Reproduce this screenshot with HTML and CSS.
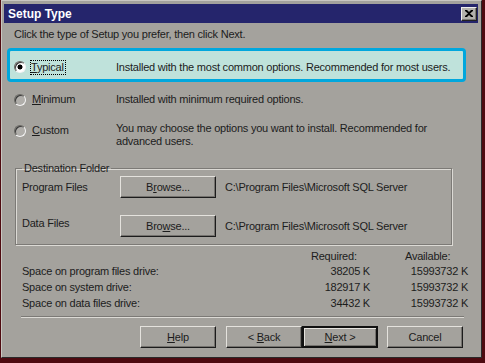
FILE: index.html
```html
<!DOCTYPE html>
<html lang="en">
<head>
    <meta charset="UTF-8">
    <title>Setup Type</title>
    <link rel="stylesheet" href="styles.css">
</head>
<body>
    <div class="window">
        <div class="title-bar">
            <span class="title">Setup Type</span>
            <span class="close-btn">
                <svg width="8" height="7" viewBox="0 0 8 7"><path d="M0 0h2l2 2 2-2h2v1L5 3.5 8 6v1H6L4 5 2 7H0V6l3-2.5L0 1z" fill="#000"/></svg>
            </span>
        </div>
        <div class="intro">Click the type of Setup you prefer, then click Next.</div>

        <div class="option selected">
            <span class="radio checked"></span>
            <span class="opt-label"><span class="focus"><u>T</u>ypical</span></span>
            <span class="opt-desc">Installed with the most common options. Recommended for most users.</span>
        </div>
        <div class="option minimum">
            <span class="radio"></span>
            <span class="opt-label"><u>M</u>inimum</span>
            <span class="opt-desc">Installed with minimum required options.</span>
        </div>
        <div class="option custom">
            <span class="radio"></span>
            <span class="opt-label"><u>C</u>ustom</span>
            <span class="opt-desc">You may choose the options you want to install. Recommended for<br>advanced users.</span>
        </div>

        <fieldset class="dest">
            <legend>Destination Folder</legend>
            <div class="dest-row">
                <span class="dest-label">Program Files</span>
                <button class="btn browse">B<u>r</u>owse...</button>
                <span class="dest-path">C:\Program Files\Microsoft SQL Server</span>
            </div>
            <div class="dest-row second">
                <span class="dest-label">Data Files</span>
                <button class="btn browse">Bro<u>w</u>se...</button>
                <span class="dest-path">C:\Program Files\Microsoft SQL Server</span>
            </div>
        </fieldset>

        <div class="space">
            <span></span>
            <span class="hdr req">Required:</span>
            <span class="hdr avail">Available:</span>

            <span>Space on program files drive:</span>
            <span class="num">38205 K</span>
            <span class="num">15993732 K</span>

            <span>Space on system drive:</span>
            <span class="num">182917 K</span>
            <span class="num">15993732 K</span>

            <span>Space on data files drive:</span>
            <span class="num">34432 K</span>
            <span class="num">15993732 K</span>
        </div>

        <div class="separator"></div>

        <div class="buttons">
            <button class="btn help"><u>H</u>elp</button>
            <button class="btn back">&lt; <u>B</u>ack</button>
            <button class="btn next default"><u>N</u>ext &gt;</button>
            <button class="btn cancel">Cancel</button>
        </div>
    </div>
</body>
</html>
```

FILE: styles.css
```css
body {
    margin: 0;
    background: #4e0a10;
    font-family: 'Liberation Sans', Arial, sans-serif;
    font-size: 11px;
    letter-spacing: -0.22px;
    color: #1c1c1c;
}
.window {
    margin-left: 1px;
    width: 481px;
    height: 358px;
    box-sizing: border-box;
    background: #a4a29d;
    border: 1px solid;
    border-color: #c9c7c2 #2a2a2a #2a2a2a #c9c7c2;
    overflow: hidden;
}
.title-bar {
    margin: 3px 3px 0 2px;
    height: 19px;
    background: #25256c;
    display: flex;
    align-items: center;
    justify-content: space-between;
}
.title {
    color: #fff;
    font-weight: bold;
    font-size: 12px;
    letter-spacing: 0;
    padding-left: 4px;
}
.close-btn {
    width: 14px;
    height: 12px;
    margin-right: 1px;
    background: #b3b1ac;
    border: 1px solid;
    border-color: #eeeeee #222 #222 #eeeeee;
    box-shadow: inset -1px -1px 0 #7d7b77;
    display: flex;
    align-items: center;
    justify-content: center;
}
.intro {
    margin: 4px 0 0 12px;
    line-height: 14px;
}

/* setup options */
.option {
    display: flex;
    align-items: flex-start;
    line-height: 13px;
}
.option.selected {
    margin: 7px 0 0 5px;
    width: 459px;
    height: 34px;
    box-sizing: border-box;
    border: 3px solid #00a7dd;
    border-radius: 4px;
    background: #bfe2db;
    padding: 9px 0 0 4px;
}
.option.minimum {
    margin: 11px 0 0 12px;
}
.option.custom {
    margin: 16px 0 0 12px;
}
.radio {
    width: 12px;
    height: 12px;
    box-sizing: border-box;
    border-radius: 50%;
    border: 1px solid;
    border-color: #6a6965 #f4f4f4 #f4f4f4 #6a6965;
    background: #b0aeaa;
    box-shadow: inset 1px 1px 0 #3a3a3a;
    margin-top: 1px;
    flex-shrink: 0;
}
.radio.checked {
    background: radial-gradient(circle, #000 0 2.2px, #fff 2.8px);
}
.custom .radio {
    margin-top: 3px;
}
.opt-label {
    width: 84px;
    margin-left: 6px;
    flex-shrink: 0;
}
.custom .opt-label {
    margin-top: 2px;
}
.focus {
    outline: 1px dotted #000;
    padding: 0 1px 1px 0;
    margin-left: -1px;
}
.selected .opt-label {
    margin-top: 1px;
}
.selected .opt-desc {
    margin-top: 1px;
}

/* destination folder */
.dest {
    margin: 13px 0 0 13px;
    width: 437px;
    height: 84px;
    box-sizing: border-box;
    padding: 0 0 0 6px;
    border: 1px solid #7c7a76;
    box-shadow: inset 1px 1px 0 #dcdad5, 1px 1px 0 #dcdad5;
}
.dest legend {
    padding: 0 2px;
    margin-left: 0;
    line-height: 14px;
}
.dest-row {
    display: flex;
    align-items: center;
    margin-top: 1px;
}
.dest-row.second {
    margin-top: 17px;
}
.dest-label {
    width: 98px;
}
.second .dest-label {
    margin-bottom: 6px;
}
.dest-path {
    margin-left: 9px;
}

.btn {
    font-family: inherit;
    font-size: 11px;
    letter-spacing: -0.22px;
    color: #1c1c1c;
    background: #a4a29d;
    height: 22px;
    box-sizing: border-box;
    border: 1px solid;
    border-color: #e4e2dd #1c1c1c #1c1c1c #e4e2dd;
    box-shadow: inset -1px -1px 0 #74726e;
    padding: 0;
    margin: 0;
}
.browse {
    width: 96px;
}

/* space requirements */
.space {
    margin: 4px 0 0 20px;
    width: 446px;
    display: grid;
    grid-template-columns: 1fr 70px 98px;
    grid-template-rows: 14px 16px 16px 16px;
    align-items: center;
}
.hdr.req {
    padding-left: 11px;
}
.hdr.avail {
    padding-left: 35px;
}
.num {
    text-align: right;
}

.separator {
    margin: 5px 0 0 19px;
    width: 443px;
    height: 1px;
    background: #7c7a76;
    border-bottom: 1px solid #dcdad5;
}

.buttons {
    display: flex;
    margin: 8px 0 0 138px;
}
.buttons .btn {
    width: 76px;
}
.back {
    margin-left: 10px;
}
.default {
    border: 2px solid #111;
    box-shadow: inset 1px 1px 0 #e4e2dd, inset -1px -1px 0 #74726e;
}
.cancel {
    margin-left: 9px;
}
```
